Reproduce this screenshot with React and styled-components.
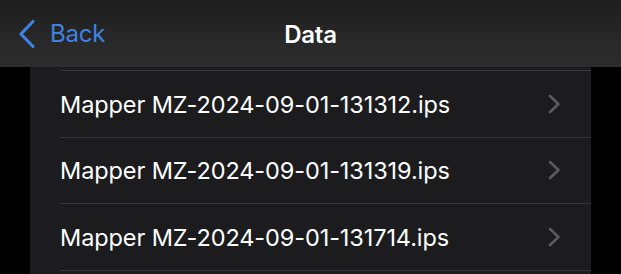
import React from "react";
import styled, { createGlobalStyle } from "styled-components";

const GlobalStyle = createGlobalStyle`
  html, body {
    margin: 0;
    padding: 0;
    background: #000;
    overflow: hidden;
  }
  body {
    font-family: Inter, "Noto Sans", "Liberation Sans", sans-serif;
    -webkit-font-smoothing: antialiased;
  }
`;

const Screen = styled.div`
  width: 621px;
  height: 274px;
  display: flex;
  flex-direction: column;
  background: #000;
  overflow: hidden;
`;

const NavBar = styled.div`
  height: 67px;
  flex-shrink: 0;
  position: relative;
  display: flex;
  align-items: center;
  justify-content: center;
  background: linear-gradient(180deg, #1e1e1e 0%, #292929 65%, #2c2c2c 100%);
`;

const BackButton = styled.div`
  position: absolute;
  left: 18px;
  top: 0;
  bottom: 0;
  display: flex;
  align-items: center;
  gap: 14px;
  color: #3f82e4;
  font-size: 24px;
  letter-spacing: -0.2px;
`;

const Title = styled.div`
  color: #fff;
  font-size: 24px;
  font-weight: 600;
  letter-spacing: -0.2px;
  margin-top: 1px;
`;

const List = styled.div`
  margin: 0 30px;
  background: #1c1c1e;
  flex: 1;
  padding-top: 3px;
`;

const Row = styled.div`
  height: 66.5px;
  box-sizing: border-box;
  margin-left: 30px;
  border-top: 1px solid #37373a;
  display: flex;
  align-items: center;
  justify-content: space-between;
  padding-right: 30px;
`;

const FileName = styled.span`
  color: #fff;
  font-size: 23.5px;
  letter-spacing: -0.1px;
  margin-top: 1px;
`;

const Chevron = () => (
  <svg width="13" height="20" viewBox="0 0 13 20">
    <path
      d="M2 2 L10.5 10 L2 18"
      fill="none"
      stroke="#5b5b5f"
      strokeWidth="2.6"
      strokeLinecap="round"
      strokeLinejoin="round"
    />
  </svg>
);

const BackChevron = () => (
  <svg width="18" height="30" viewBox="0 0 18 30">
    <path
      d="M15 2.5 L3 15 L15 27.5"
      fill="none"
      stroke="#3f82e4"
      strokeWidth="3.2"
      strokeLinecap="round"
      strokeLinejoin="round"
    />
  </svg>
);

const files = [
  "Mapper MZ-2024-09-01-131312.ips",
  "Mapper MZ-2024-09-01-131319.ips",
  "Mapper MZ-2024-09-01-131714.ips",
];

export default function App() {
  return (
    <>
      <GlobalStyle />
      <Screen>
        <NavBar>
          <BackButton>
            <BackChevron />
            <span>Back</span>
          </BackButton>
          <Title>Data</Title>
        </NavBar>
        <List>
          {files.map((f) => (
            <Row key={f}>
              <FileName>{f}</FileName>
              <Chevron />
            </Row>
          ))}
          <Row />
        </List>
      </Screen>
    </>
  );
}
